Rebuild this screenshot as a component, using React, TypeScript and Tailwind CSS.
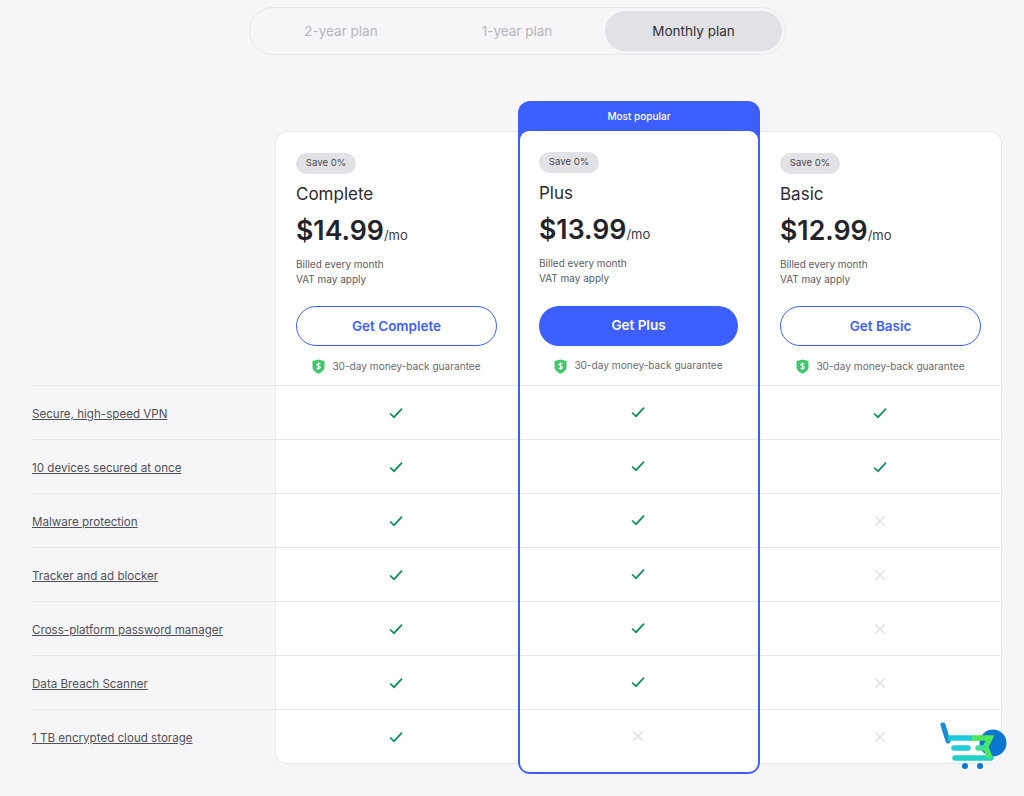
import React from "react";

const features = [
  "Secure, high-speed VPN",
  "10 devices secured at once",
  "Malware protection",
  "Tracker and ad blocker",
  "Cross-platform password manager",
  "Data Breach Scanner",
  "1 TB encrypted cloud storage",
];

function Check() {
  return (
    <svg width="16" height="14" viewBox="0 0 16 14" fill="none" aria-hidden="true">
      <path d="M2 7.5L6 11.2L14 2.6" stroke="#0f8f5e" strokeWidth="1.7" />
    </svg>
  );
}

function Cross() {
  return (
    <svg width="12" height="12" viewBox="0 0 12 12" fill="none" aria-hidden="true">
      <path d="M1.5 1.5L10.5 10.5M10.5 1.5L1.5 10.5" stroke="#dfdfe3" strokeWidth="1.5" />
    </svg>
  );
}

function Shield() {
  return (
    <svg width="13" height="15" viewBox="0 0 13 15" aria-hidden="true">
      <path d="M6.5 0.5L12.5 2V8.5C12.5 11.5 9 13.7 6.5 14.7C4 13.7 0.5 11.5 0.5 8.5V2Z" fill="#40c96c" />
      <path d="M8.4 5.2C8 4.4 5 4 4.8 5.6C4.7 7.3 8.4 6.6 8.3 8.5C8.1 10.1 5 9.8 4.5 8.8M6.5 3.4V11" stroke="#fff" strokeWidth="1.1" fill="none" />
    </svg>
  );
}

function CartLogo() {
  return (
    <svg width="70" height="50" viewBox="0 0 70 50" aria-hidden="true">
      <circle cx="54" cy="22" r="13.5" fill="#0a76cf" />
      <path d="M4 4L9 20" stroke="#1b8ed6" strokeWidth="5" strokeLinecap="round" />
      <path d="M9 17H34" stroke="#1fc8d8" strokeWidth="5.5" />
      <path d="M33 17H51L46 27" stroke="#4ae85a" strokeWidth="5.5" fill="none" />
      <path d="M15 27H29" stroke="#22c9d6" strokeWidth="5.5" strokeLinecap="round" />
      <path d="M39 27H47" stroke="#3fdc96" strokeWidth="5.5" strokeLinecap="round" />
      <path d="M16 37H52" stroke="#22d0c8" strokeWidth="5.5" strokeLinecap="round" />
      <path d="M47 27L51 37" stroke="#4ae85a" strokeWidth="5.5" />
      <circle cx="26" cy="45" r="3" fill="#0a76cf" />
      <circle cx="41" cy="45" r="3" fill="#0a76cf" />
    </svg>
  );
}

function PlanHeader({ name, price, primary }: { name: string; price: string; primary?: boolean }) {
  return (
    <div className={primary ? "flex h-[254px] flex-col items-start" : "flex h-[253px] flex-col items-start"}>
      <div className="mt-[21px] flex h-[21px] w-[60px] items-center justify-center rounded-full bg-[#e1e1e6] text-[9.6px] text-[#4a4a50]">
        Save 0%
      </div>
      <div className="mt-[8px] text-[17px] leading-[24px] text-[#2a2a30]">{name}</div>
      <div className="mt-[6px] flex items-baseline leading-[36px] text-[#23232a]">
        <span className="text-[26.7px] font-semibold">{price}</span>
        <span className="text-[13px] text-[#3a3a40]">/mo</span>
      </div>
      <div className="mt-[4px] text-[10px] leading-[15px] text-[#5c5c64]">
        <div>Billed every month</div>
        <div>VAT may apply</div>
      </div>
      <div
        className={
          primary
            ? "mt-[20px] flex h-[40px] w-[199px] items-center justify-center rounded-full bg-[#3e5fff] text-[13.5px] font-semibold text-white"
            : "mt-[19px] flex h-[40px] w-[201px] items-center justify-center rounded-full border border-[#3e5fff] text-[13.5px] font-semibold text-[#3e5fff]"
        }
      >
        Get {name}
      </div>
      <div className={primary ? "mt-[12px] flex h-[17px] w-[199px] items-center justify-center gap-[7px] text-[10.1px] text-[#6a6a72]" : "mt-[12px] flex h-[17px] w-[201px] items-center justify-center gap-[7px] text-[10.1px] text-[#6a6a72]"}>
        <Shield />
        <span>30-day money-back guarantee</span>
      </div>
    </div>
  );
}

function Cells({ values }: { values: boolean[] }) {
  return (
    <>
      {values.map((v, i) => (
        <div key={i} className="flex h-[54px] items-center justify-center border-t border-[#e6e6ea] pr-[2px]">
          {v ? <Check /> : <Cross />}
        </div>
      ))}
    </>
  );
}

export default function App() {
  return (
    <div className="relative h-[796px] overflow-hidden bg-[#f6f6f8] font-['Inter',sans-serif]">
      <div className="pl-[249px] pt-[7px]">
        <div className="flex h-[48px] w-[537px] items-center rounded-full border border-[#e8e8ec] p-[3px] text-[13.5px]">
          <div className="flex h-[40px] flex-1 items-center justify-center text-[#b5b5ba]">2-year plan</div>
          <div className="flex h-[40px] flex-1 items-center justify-center text-[#b5b5ba]">1-year plan</div>
          <div className="flex h-[40px] w-[177px] items-center justify-center rounded-full bg-[#e1e1e6] text-[#303036]">Monthly plan</div>
        </div>
      </div>

      <div className="mt-[46px] flex items-start pl-[32px]">
        <div className="w-[243px] pt-[284px]">
          {features.map((f) => (
            <div key={f} className="flex h-[54px] items-center border-t border-[#e6e6ea] pt-[4px] text-[11.6px] text-[#50505a] underline">
              {f}
            </div>
          ))}
        </div>

        <div className="mt-[30px] w-[243px] rounded-tl-xl rounded-bl-xl border-y border-l border-[#e8e8ec] bg-white">
          <div className="pl-[20px]">
            <PlanHeader name="Complete" price="$14.99" />
          </div>
          <Cells values={[true, true, true, true, true, true, true]} />
        </div>

        <div className="z-10 flex h-[673px] w-[242px] flex-col rounded-xl border-[2.5px] border-[#3e5fff] bg-[#3e5fff]">
          <div className="flex h-[27.5px] items-center justify-center text-[10px] font-medium text-white">Most popular</div>
          <div className="flex-1 rounded-[9px] bg-white">
            <div className="pl-[19px]">
              <PlanHeader name="Plus" price="$13.99" primary />
            </div>
            <Cells values={[true, true, true, true, true, true, false]} />
          </div>
        </div>

        <div className="mt-[30px] w-[242px] rounded-tr-xl rounded-br-xl border-y border-r border-[#e8e8ec] bg-white">
          <div className="pl-[20px]">
            <PlanHeader name="Basic" price="$12.99" />
          </div>
          <Cells values={[true, true, false, false, false, false, false]} />
        </div>
      </div>

      <div className="absolute left-[939px] top-[721px]">
        <CartLogo />
      </div>
    </div>
  );
}
